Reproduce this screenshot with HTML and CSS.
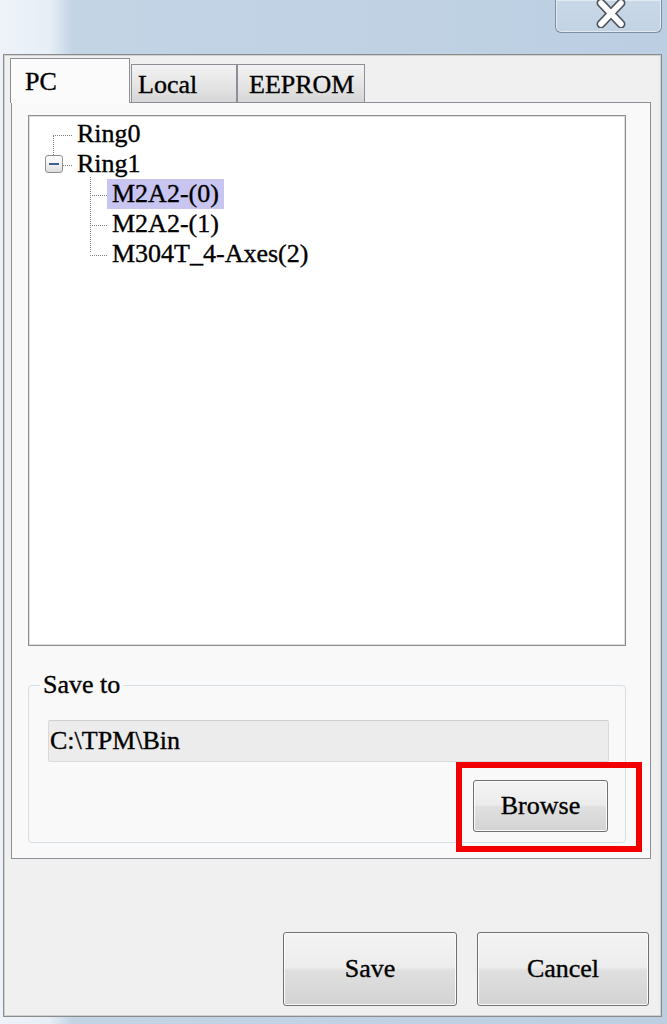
FILE: index.html
```html
<!DOCTYPE html>
<html>
<head>
<meta charset="utf-8">
<link rel="stylesheet" href="styles.css">
</head>
<body>
<div class="window">
  <div class="titlebar">
    <div class="close-btn">
      <svg width="32" height="28" viewBox="0 0 32 28">
        <path d="M6 3 L26 24 M26 3 L6 24" stroke="#50555e" stroke-width="9" stroke-linecap="round" fill="none"/>
        <path d="M6 3 L26 24 M26 3 L6 24" stroke="#ffffff" stroke-width="5.5" stroke-linecap="round" fill="none"/>
      </svg>
    </div>
  </div>
  <div class="dialog">
    <div class="tabs">
      <div class="tab active">PC</div>
      <div class="tab local">Local</div>
      <div class="tab eeprom">EEPROM</div>
    </div>
    <div class="panel">
      <div class="tree">
        <div class="node ring0"><span class="conn c19"></span><span class="label">Ring0</span></div>
        <div class="node ring1"><span class="expander"><span class="minus"></span></span><span class="conn c9"></span><span class="label">Ring1</span></div>
        <div class="children">
          <div class="node child"><span class="conn c17"></span><span class="label selected">M2A2-(0)</span></div>
          <div class="node child"><span class="conn c17"></span><span class="label item">M2A2-(1)</span></div>
          <div class="node child"><span class="conn c17"></span><span class="label item">M304T_4-Axes(2)</span></div>
        </div>
      </div>
      <fieldset class="group">
        <legend>Save to</legend>
        <div class="path-field">C:\TPM\Bin</div>
        <div class="browse-row">
          <span class="annot-wrap">
            <button class="btn browse">Browse</button>
            <span class="annotation"></span>
          </span>
        </div>
      </fieldset>
    </div>
    <div class="actions">
      <button class="btn big save">Save</button>
      <button class="btn big cancel">Cancel</button>
    </div>
  </div>
</div>
</body>
</html>
```
FILE: styles.css
```css
* { box-sizing: border-box; }

html, body {
  margin: 0;
  padding: 0;
}

body {
  width: 667px;
  height: 1024px;
  overflow: hidden;
  font-family: "Liberation Serif", "Times New Roman", serif;
  font-size: 26px;
  color: #000;
  -webkit-text-stroke: 0.35px #000;
}

.window {
  width: 667px;
  height: 1024px;
  background: linear-gradient(90deg, #eef3f9 0px, #e6eef6 50px, #c3d4e5 72px, #bccfe2 100%);
}

.titlebar {
  height: 54px;
  display: flex;
  justify-content: flex-end;
  padding-right: 5px;
}

.close-btn {
  width: 107px;
  height: 33px;
  border: 1px solid #7c8da0;
  border-top: none;
  border-radius: 0 0 6px 6px;
  background: linear-gradient(180deg, #c9d8e7 0%, #c2d3e4 100%);
  box-shadow: inset 0 0 0 1px rgba(255,255,255,0.5);
  display: flex;
  justify-content: center;
  align-items: flex-start;
  padding-left: 5px;
}

.close-btn svg { display: block; }

.dialog {
  margin-left: 3px;
  width: 659px;
  border: 1px solid #8c8c8c;
  box-shadow: inset 0 0 0 1px #d0d0d0;
  background: #f0f0f0;
  padding: 3px 10px 10px 7px;
}

.tabs {
  display: flex;
  align-items: flex-end;
  height: 44px;
}

.tab {
  border: 1px solid #8c8f96;
  border-bottom: none;
  line-height: 30px;
  white-space: nowrap;
}

.tab.active {
  position: relative;
  z-index: 1;
  width: 120px;
  height: 45px;
  margin-left: -1px;
  margin-bottom: -1px;
  background: #fbfbfb;
  padding: 8px 0 0 14px;
}

.tab.local {
  width: 106px;
  height: 38px;
  margin-left: 1px;
  padding: 5px 0 0 6px;
  background: linear-gradient(180deg, #f3f3f3 0%, #e6e6e6 50%, #d6d6d6 100%);
}

.tab.eeprom {
  width: 128px;
  height: 38px;
  padding: 5px 0 0 11px;
  background: linear-gradient(180deg, #f3f3f3 0%, #e6e6e6 50%, #d6d6d6 100%);
}

.panel {
  width: 640px;
  border: 1px solid #8c8f96;
  background: #f9f9f9;
  padding: 12px 24px 15px 16px;
}

.tree {
  height: 531px;
  border: 1px solid #8e8e8e;
  box-shadow: inset 0 0 0 1px #dedede;
  background: #ffffff;
  padding-top: 3px;
}

.node {
  position: relative;
  display: flex;
  align-items: center;
  height: 30px;
  line-height: 30px;
  white-space: nowrap;
}

.conn {
  height: 0;
  border-top: 1px dotted #808080;
  margin-top: 2px;
}
.c19 { width: 19px; margin-right: 5px; }
.c9 { width: 9px; margin-right: 5px; }
.c17 { width: 17px; }

.ring0 { padding-left: 24px; }
.ring0::after {
  content: "";
  position: absolute;
  left: 24px;
  top: 17px;
  height: 19px;
  border-left: 1px dotted #808080;
}

.ring1 { padding-left: 16px; }

.expander {
  width: 18px;
  height: 18px;
  border: 1px solid #8f8f8f;
  border-radius: 3px;
  background: linear-gradient(180deg, #ffffff 0%, #f2f2f2 50%, #dcdcdc 100%);
  display: flex;
  align-items: center;
  justify-content: center;
}
.minus {
  width: 10px;
  height: 2px;
  background: #3f5f96;
}

.children { position: relative; }
.children::before {
  content: "";
  position: absolute;
  left: 61px;
  top: -2px;
  height: 75px;
  border-left: 1px dotted #808080;
}
.child { padding-left: 61px; }

.label.selected,
.label.item {
  padding: 0 5px;
  line-height: 30px;
}
.label.selected { background: #c8c6f0; }

.group {
  margin: 24px 0 0 0;
  border: 1px solid #d6dfe6;
  border-radius: 4px;
  padding: 20px 16px 10px 19px;
  min-width: 0;
}

.group legend {
  margin-left: -8px;
  padding: 0 3px;
  line-height: 30px;
  font-size: 26px;
}

.path-field {
  height: 42px;
  line-height: 40px;
  background: #ececec;
  border: 1px solid #dadada;
  border-top-color: #cfcfcf;
  border-radius: 2px;
  padding-left: 1px;
}

.browse-row {
  display: flex;
  justify-content: flex-end;
  margin-top: 18px;
  padding-right: 1px;
}

.annot-wrap {
  position: relative;
  display: block;
}

.annotation {
  position: absolute;
  left: -17px;
  right: -34px;
  top: -18px;
  bottom: -20px;
  border: 6px solid #f20000;
  pointer-events: none;
}

.btn {
  display: block;
  font-family: "Liberation Serif", "Times New Roman", serif;
  font-size: 26px;
  color: #000;
  -webkit-text-stroke: 0.35px #000;
  border: 1px solid #707070;
  border-radius: 3px;
  background: linear-gradient(180deg, #f4f4f4 0%, #ececec 48%, #dfdfdf 52%, #d3d3d3 100%);
  box-shadow: inset 0 0 0 1px #fbfbfb;
  padding: 0;
  cursor: default;
}

.browse {
  width: 135px;
  height: 52px;
}

.actions {
  display: flex;
  justify-content: flex-end;
  gap: 20px;
  margin-top: 73px;
  margin-right: 2px;
}

.big { height: 74px; }
.save { width: 174px; }
.cancel { width: 172px; }
```
